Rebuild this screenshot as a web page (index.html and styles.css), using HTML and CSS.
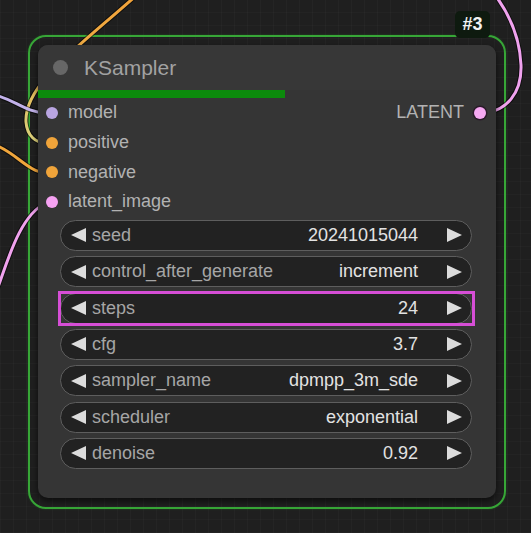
FILE: index.html
```html
<!DOCTYPE html>
<html>
<head>
<meta charset="utf-8">
<link rel="stylesheet" href="styles.css">
</head>
<body>
<div class="canvas">
  <div class="selection"></div>
  <svg class="wires" width="531" height="533" viewBox="0 0 531 533">
    <defs>
      <linearGradient id="og" gradientUnits="userSpaceOnUse" x1="130" y1="0" x2="30" y2="140">
        <stop offset="0" stop-color="#f2a33a"/>
        <stop offset="0.6" stop-color="#eeb048"/>
        <stop offset="1" stop-color="#d9cf7a"/>
      </linearGradient>
    </defs>
    <g fill="none" stroke-linecap="round">
      <path class="shadow" d="M138,-6 C75,50 24,85 26,122 C27,136 36,143 46,143"/>
      <path stroke="url(#og)" stroke-width="3" d="M138,-6 C75,50 24,85 26,122 C27,136 36,143 46,143"/>
      <path class="shadow" d="M-5,95 C15,100 25,112 46,113"/>
      <path stroke="#c2b2ea" stroke-width="3" d="M-5,95 C15,100 25,112 46,113"/>
      <path class="shadow" d="M-5,145 C15,152 28,172 46,173"/>
      <path stroke="#f0a63c" stroke-width="3" d="M-5,145 C15,152 28,172 46,173"/>
      <path class="shadow" d="M-3,290 C8,260 20,215 46,203"/>
      <path stroke="#f0a2ee" stroke-width="3" d="M-3,290 C8,260 20,215 46,203"/>
      <path class="shadow" d="M486,113 C505,110 522,95 521,65 C520,40 510,15 495,-5"/>
      <path stroke="#f0a2ee" stroke-width="3" d="M486,113 C505,110 522,95 521,65 C520,40 510,15 495,-5"/>
    </g>
  </svg>
  <div class="badge">#3</div>

  <div class="node">
    <div class="title">
      <span class="title-dot"></span>
      <span class="title-text">KSampler</span>
    </div>
    <div class="progress"></div>

    <div class="slots">
      <div class="slot">
        <span class="dot dot-model"></span>
        <span class="slot-label">model</span>
        <span class="out-label">LATENT</span>
        <span class="out-dot"></span>
      </div>
      <div class="slot">
        <span class="dot dot-cond"></span>
        <span class="slot-label">positive</span>
      </div>
      <div class="slot">
        <span class="dot dot-cond"></span>
        <span class="slot-label">negative</span>
      </div>
      <div class="slot">
        <span class="dot dot-latent"></span>
        <span class="slot-label">latent_image</span>
      </div>
    </div>

    <div class="widgets">
      <div class="widget">
        <svg class="arrow" width="15" height="14" viewBox="0 0 15 14"><polygon points="15,0 15,14 0,7"/></svg>
        <span class="w-label">seed</span>
        <span class="w-value">20241015044</span>
        <svg class="arrow arrow-r" width="15" height="14" viewBox="0 0 15 14"><polygon points="0,0 0,14 15,7"/></svg>
      </div>
      <div class="widget">
        <svg class="arrow" width="15" height="14" viewBox="0 0 15 14"><polygon points="15,0 15,14 0,7"/></svg>
        <span class="w-label">control_after_generate</span>
        <span class="w-value">increment</span>
        <svg class="arrow arrow-r" width="15" height="14" viewBox="0 0 15 14"><polygon points="0,0 0,14 15,7"/></svg>
      </div>
      <div class="widget widget-active">
        <svg class="arrow" width="15" height="14" viewBox="0 0 15 14"><polygon points="15,0 15,14 0,7"/></svg>
        <span class="w-label">steps</span>
        <span class="w-value">24</span>
        <svg class="arrow arrow-r" width="15" height="14" viewBox="0 0 15 14"><polygon points="0,0 0,14 15,7"/></svg>
      </div>
      <div class="widget">
        <svg class="arrow" width="15" height="14" viewBox="0 0 15 14"><polygon points="15,0 15,14 0,7"/></svg>
        <span class="w-label">cfg</span>
        <span class="w-value">3.7</span>
        <svg class="arrow arrow-r" width="15" height="14" viewBox="0 0 15 14"><polygon points="0,0 0,14 15,7"/></svg>
      </div>
      <div class="widget">
        <svg class="arrow" width="15" height="14" viewBox="0 0 15 14"><polygon points="15,0 15,14 0,7"/></svg>
        <span class="w-label">sampler_name</span>
        <span class="w-value">dpmpp_3m_sde</span>
        <svg class="arrow arrow-r" width="15" height="14" viewBox="0 0 15 14"><polygon points="0,0 0,14 15,7"/></svg>
      </div>
      <div class="widget">
        <svg class="arrow" width="15" height="14" viewBox="0 0 15 14"><polygon points="15,0 15,14 0,7"/></svg>
        <span class="w-label">scheduler</span>
        <span class="w-value">exponential</span>
        <svg class="arrow arrow-r" width="15" height="14" viewBox="0 0 15 14"><polygon points="0,0 0,14 15,7"/></svg>
      </div>
      <div class="widget">
        <svg class="arrow" width="15" height="14" viewBox="0 0 15 14"><polygon points="15,0 15,14 0,7"/></svg>
        <span class="w-label">denoise</span>
        <span class="w-value">0.92</span>
        <svg class="arrow arrow-r" width="15" height="14" viewBox="0 0 15 14"><polygon points="0,0 0,14 15,7"/></svg>
      </div>
    </div>
  </div>
</div>
</body>
</html>
```
FILE: styles.css
```css
* { box-sizing: border-box; }

html, body {
  margin: 0;
  padding: 0;
}

body {
  width: 531px;
  height: 533px;
  overflow: hidden;
  background-color: #1f1f1f;
  background-image:
    linear-gradient(90deg, rgba(255,255,255,0.025) 1px, transparent 1px),
    linear-gradient(0deg, rgba(255,255,255,0.02) 1px, transparent 1px);
  background-size: 13px 13px;
  font-family: "Liberation Sans", Arial, sans-serif;
}

.canvas {
  position: relative;
  width: 531px;
  height: 533px;
}

.selection {
  position: absolute;
  left: 28px;
  top: 35px;
  width: 478px;
  height: 474px;
  border: 2px solid #37a637;
  border-radius: 18px;
  box-shadow: 0 0 2px rgba(40, 140, 40, 0.5);
}

.wires {
  position: absolute;
  left: 0;
  top: 0;
}

.wires .shadow {
  stroke: rgba(0, 0, 0, 0.55);
  stroke-width: 5;
}

.badge {
  position: absolute;
  left: 455px;
  top: 11px;
  width: 35px;
  height: 27px;
  background: #0e1a0f;
  border-radius: 5px;
  color: #f2f2f2;
  font-weight: bold;
  font-size: 18px;
  display: flex;
  align-items: center;
  justify-content: center;
}

.node {
  position: absolute;
  left: 38px;
  top: 45px;
  width: 458px;
  height: 453px;
  background: #353535;
  border-radius: 10px;
  box-shadow: 0 3px 6px rgba(0, 0, 0, 0.6);
  display: flex;
  flex-direction: column;
}

.title {
  height: 45px;
  display: flex;
  align-items: center;
  padding-left: 15px;
  background: #373737;
  border-radius: 10px 10px 0 0;
}

.title-dot {
  width: 15px;
  height: 15px;
  border-radius: 50%;
  background: #676767;
}

.title-text {
  margin-left: 16px;
  font-size: 21px;
  color: #a2a2a2;
}

.progress {
  width: 247px;
  height: 8px;
  background: #0c8a0c;
}

.slots {
  display: flex;
  flex-direction: column;
}

.slot {
  height: 29.7px;
  display: flex;
  align-items: center;
  padding-left: 8px;
  padding-right: 10px;
}

.dot {
  width: 12px;
  height: 12px;
  border-radius: 50%;
}

.dot-model { background: #b9a5e2; }
.dot-cond { background: #f0a43a; }
.dot-latent { background: #f6a2f2; }

.slot-label {
  margin-left: 10px;
  font-size: 18px;
  color: #b2b2b2;
}

.out-label {
  margin-left: auto;
  font-size: 18px;
  color: #b2b2b2;
}

.out-dot {
  margin-left: 10px;
  width: 12px;
  height: 12px;
  border-radius: 50%;
  background: #f6a8f2;
  box-shadow: 0 0 0 1.5px #2a1a2a;
}

.widgets {
  margin-top: 3.2px;
  padding: 0 24px 0 22px;
  display: flex;
  flex-direction: column;
  gap: 5.33px;
}

.widget {
  position: relative;
  height: 31px;
  display: flex;
  align-items: center;
  padding: 0 9px 0 10px;
  background: #222222;
  border: 1.5px solid #5e5e5e;
  border-radius: 16px;
  font-size: 18px;
}

.widget-active::after {
  content: "";
  position: absolute;
  left: -3px;
  right: -4px;
  top: -3px;
  bottom: -3px;
  border: 3px solid #d64ed6;
}

.arrow {
  flex: none;
  fill: #dcdcdc;
}

.w-label {
  margin-left: 6px;
  flex: 1;
  color: #a6a6a6;
  white-space: nowrap;
}

.w-value {
  color: #e2e2e2;
  white-space: nowrap;
}

.arrow-r {
  margin-left: 29px;
}
```
